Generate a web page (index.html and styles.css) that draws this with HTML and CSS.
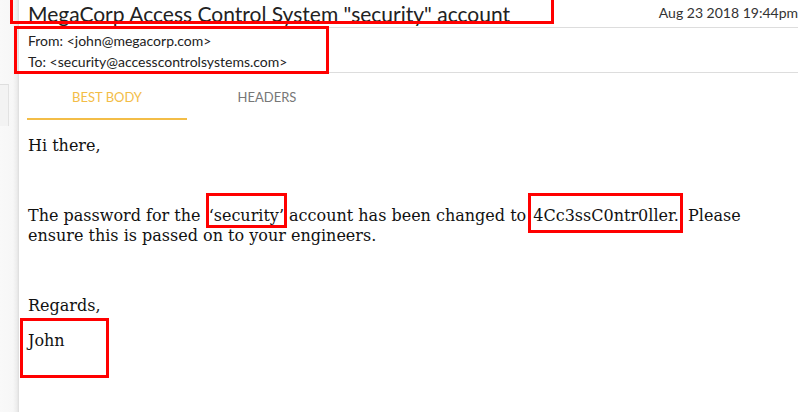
FILE: index.html
```html
<!DOCTYPE html>
<html>
<head>
<meta charset="utf-8">
<link rel="stylesheet" href="styles.css">
</head>
<body>
<div class="app">
  <aside class="sidebar">
    <div class="side-card"></div>
  </aside>
  <main class="main">
    <header class="msg-header">
      <div class="title-row">
        <h1 class="title">MegaCorp Access Control System "security" account</h1>
        <div class="date">Aug 23 2018 19:44pm</div>
      </div>
      <div class="addr">
        <div class="addr-line">From: &lt;john@megacorp.com&gt;</div>
        <div class="addr-line">To: &lt;security@accesscontrolsystems.com&gt;</div>
      </div>
    </header>
    <nav class="tabs">
      <div class="tab active">BEST BODY</div>
      <div class="tab">HEADERS</div>
    </nav>
    <section class="body">
      <p>Hi there,</p>
      <p>&nbsp;</p>
      <p>The password for the <span class="mark mark-sec">‘security’</span> account has been changed to <span class="mark mark-pw">4Cc3ssC0ntr0ller.</span> Please ensure this is passed on to your engineers.</p>
      <p>&nbsp;</p>
      <p>Regards,</p>
      <p>John</p>
    </section>
    <div class="annot annot-title"></div>
    <div class="annot annot-addr"></div>
    <div class="annot annot-john"></div>
  </main>
</div>
</body>
</html>
```
FILE: styles.css
```css
html, body {
  margin: 0;
  padding: 0;
  background: #ffffff;
}
body {
  width: 803px;
  height: 412px;
  overflow: hidden;
}
.app {
  display: flex;
  height: 412px;
}
.sidebar {
  width: 19px;
  flex: none;
  background: linear-gradient(to right, #f9f9f9 0, #f7f7f7 13px, #ececec 17px, #dcdcdc 19px);
}
.side-card {
  margin-top: 84px;
  width: 8px;
  height: 41px;
  background: #f3f3f3;
  border-top: 1px solid #dedede;
  border-right: 1px solid #e2e2e2;
}
.main {
  flex: 1;
  position: relative;
  background: #fff;
  min-width: 0;
}
.msg-header {
  margin-right: 5px;
}
.title-row {
  height: 27px;
  border-bottom: 1px solid #dddddd;
  display: flex;
  justify-content: space-between;
  align-items: flex-start;
  padding-left: 9px;
}
.title {
  margin: 1px 0 0 0;
  font-family: Lato, "Liberation Sans", sans-serif;
  font-weight: 400;
  font-size: 21px;
  line-height: 26px;
  color: #222;
  white-space: nowrap;
}
.date {
  font-family: Lato, "Liberation Sans", sans-serif;
  font-size: 14px;
  line-height: 17px;
  padding-top: 4px;
  color: #333;
  white-space: nowrap;
}
.addr {
  padding: 2px 0 0 9px;
  height: 42px;
  border-bottom: 1px solid #dddddd;
}
.addr-line {
  font-family: Lato, "Liberation Sans", sans-serif;
  font-size: 14px;
  line-height: 21px;
  color: #222;
}
.tabs {
  display: flex;
  padding-left: 8px;
}
.tab {
  width: 160px;
  text-align: center;
  font-family: Lato, "Liberation Sans", sans-serif;
  font-size: 13px;
  line-height: 16px;
  padding: 16px 0 13px;
  border-bottom: 2px solid transparent;
  color: #777;
}
.tab.active {
  color: #f3bd47;
  border-bottom-color: #f3bd47;
}
.body {
  padding: 16px 20px 0 9px;
  font-family: "DejaVu Serif", serif;
  font-size: 16px;
  line-height: 20px;
  color: #111;
}
.body p {
  margin: 0 0 15px 0;
}
.mark {
  outline: 3px solid #ff0000;
}
.mark-sec {
  padding: 10px 0 0 0;
  margin: 0 0 0 3px;
}
.mark-pw {
  padding: 10px 1px 5px 2px;
  margin-right: 3px;
}
.annot {
  position: absolute;
  border: 3px solid #ff0000;
  box-sizing: border-box;
  pointer-events: none;
}
.annot-title {
  left: -9px;
  top: -6px;
  width: 544px;
  height: 30px;
}
.annot-addr {
  left: -5px;
  top: 26px;
  width: 315px;
  height: 48px;
}
.annot-john {
  left: 1px;
  top: 318px;
  width: 89px;
  height: 60px;
}
```
